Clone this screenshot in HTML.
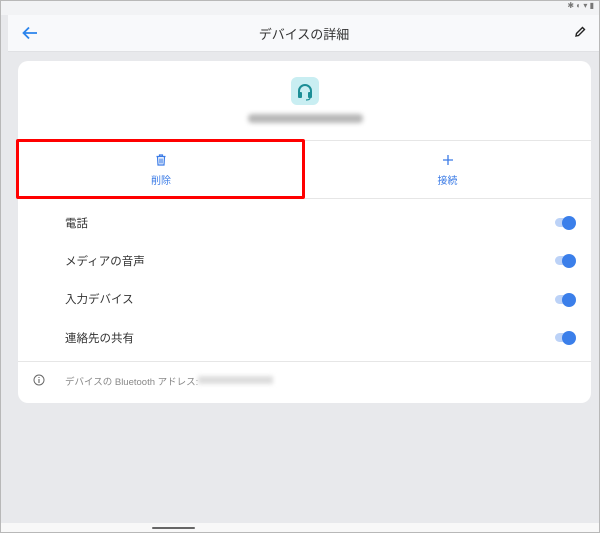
<!DOCTYPE html>
<html><head><meta charset="utf-8"><style>
*{margin:0;padding:0;box-sizing:border-box}
body{width:600px;height:533px;overflow:hidden;font-family:"Liberation Sans","Noto Sans CJK JP",sans-serif;background:#e8e9ec;position:relative}
.frame{position:absolute;inset:0;border:1px solid #b8b8b8;pointer-events:none;z-index:10}
.status{position:absolute;left:0;top:0;width:600px;height:15px;background:#f2f3f5}
.appbar{position:absolute;left:8px;top:15px;width:592px;height:37px;background:#f8f9fb;border-bottom:1px solid #e0e1e4}
.title{position:absolute;left:0;right:0;top:9px;text-align:center;font-size:13px;color:#333}
.card{position:absolute;left:18px;top:61px;width:573px;height:342px;background:#fff;border-radius:10px}
.ic{position:absolute;left:273px;top:16px;width:28px;height:28px;background:#c9eef2;border-radius:6px}
.blur{position:absolute;left:230px;top:53px;width:115px;height:9px;background:#888;filter:blur(2.5px);border-radius:4px;opacity:.6}
.hr{position:absolute;left:0;width:573px;height:1px;background:#e6e6e6}
.btn{position:absolute;top:80px;height:57px;text-align:center;color:#3b7be6;font-size:10px}
.red{position:absolute;left:16px;top:139px;width:289px;height:60px;border:3px solid #f00;border-radius:2px;z-index:5}
.row{position:absolute;left:47px;font-size:11.5px;color:#333}
.tg{position:absolute;left:537px;width:18px;height:9px;border-radius:5px;background:#bcd2f7}
.tg::after{content:"";position:absolute;left:7px;top:-2.5px;width:14px;height:14px;border-radius:50%;background:#3b7fea}
.nav{position:absolute;left:0;top:523px;width:600px;height:10px;background:#f8f8f8}
</style></head><body>
<div class="status"><span style="position:absolute;right:6px;top:1px;font-size:8px;color:#777">✱ ◐ ▾ ▮</span></div>
<div class="appbar">
<svg style="position:absolute;left:14px;top:11px" width="16" height="14" viewBox="0 0 16 14"><path d="M15 7H2M7 1.5L1.5 7 7 12.5" stroke="#2b84ec" stroke-width="1.8" fill="none"/></svg>
<div class="title">デバイスの詳細</div>
<svg style="position:absolute;left:566px;top:11px" width="12" height="12" viewBox="0 0 12 12"><path d="M2 10l.5-2.5 6-6 2 2-6 6z" stroke="#222" stroke-width="1.4" fill="none"/></svg>
</div>
<div class="card">
<div class="ic"><svg width="28" height="28" viewBox="0 0 28 28"><path d="M8 17v-3a6 6 0 0112 0v3" stroke="#1c8e96" stroke-width="2" fill="none"/><rect x="7" y="15" width="4" height="6" rx="1" fill="#1c8e96"/><rect x="17" y="15" width="4" height="6" rx="1" fill="#1c8e96"/><path d="M19 21q0 2-4 2" stroke="#1c8e96" stroke-width="1.2" fill="none"/></svg></div>
<div class="blur"></div>
<div class="hr" style="top:79px"></div>
<div class="btn" style="left:0;width:286px"><svg style="margin-top:13px" width="12" height="12" viewBox="0 0 12 12"><path d="M1.5 2.5h9M4.5 2.5V1h3v1.5M2.5 2.5l.5 8.5h6l.5-8.5M5 4.5v5M7 4.5v5" stroke="#3b7be6" stroke-width="1.2" fill="none"/></svg><div style="margin-top:3px">削除</div></div>
<div class="btn" style="left:286px;width:287px"><svg style="margin-top:13px" width="12" height="12" viewBox="0 0 12 12"><path d="M6 1v10M1 6h10" stroke="#3b7be6" stroke-width="1.3"/></svg><div style="margin-top:3px">接続</div></div>
<div class="hr" style="top:137px"></div>
<div class="row" style="top:154px">電話</div><div class="tg" style="top:157px"></div>
<div class="row" style="top:192px">メディアの音声</div><div class="tg" style="top:195px"></div>
<div class="row" style="top:230px">入力デバイス</div><div class="tg" style="top:234px"></div>
<div class="row" style="top:269px">連絡先の共有</div><div class="tg" style="top:272px"></div>
<div class="hr" style="top:300px"></div>
<svg style="position:absolute;left:15px;top:313px" width="12" height="12" viewBox="0 0 12 12"><circle cx="6" cy="6" r="5" stroke="#666" stroke-width="1" fill="none"/><path d="M6 5v4M6 3v1" stroke="#666" stroke-width="1.1"/></svg>
<div class="row" style="top:313px;font-size:9.5px;color:#888">デバイスの Bluetooth アドレス:</div>
<div style="position:absolute;left:180px;top:315px;width:75px;height:8px;background:#ddd;filter:blur(2px)"></div>
</div>
<div class="red"></div>
<div class="nav"><div style="position:absolute;left:152px;top:4px;width:43px;height:2px;background:#666;border-radius:1px"></div></div>
<div class="frame"></div>
</body></html>
